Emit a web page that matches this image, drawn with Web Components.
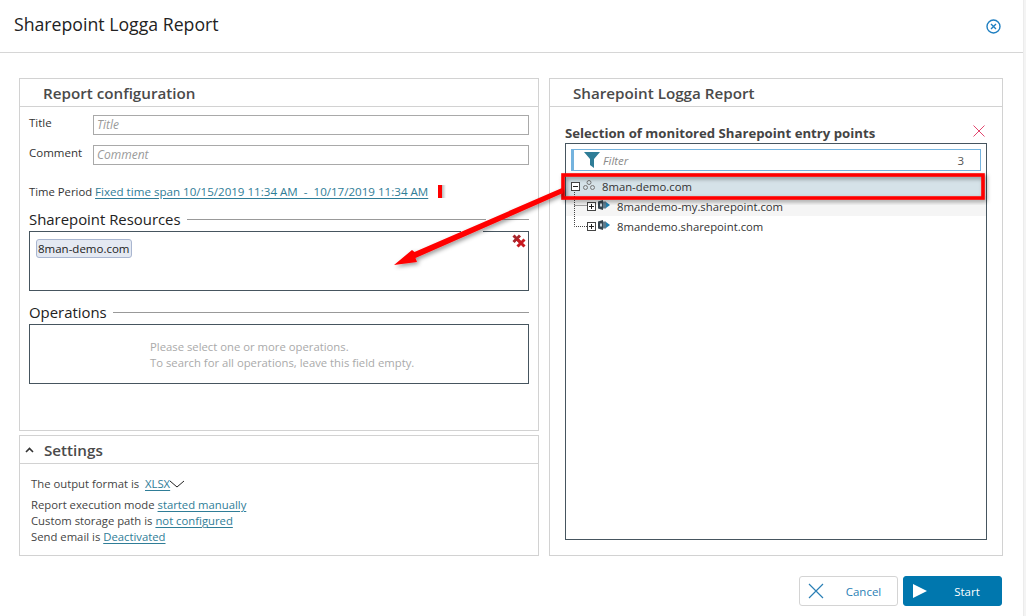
<!DOCTYPE html>
<html>
<head>
<meta charset="utf-8">
<title>Sharepoint Logga Report</title>
<style>
  html, body { margin: 0; height: 100%; background: #f4f4f4; overflow: hidden; }
  body { font-family: "Open Sans", "Noto Sans", sans-serif; }
</style>
</head>
<body>
<report-dialog></report-dialog>

<script>
(function () { 'use strict';

  const FONT = '"Open Sans", "Noto Sans", sans-serif';

  function make(tag, css, html) {
    customElements.define(tag, class extends HTMLElement {
      constructor() {
        super();
        this.attachShadow({ mode: 'open' });
        this.shadowRoot.innerHTML = `<style>${css}</style>${typeof html === 'function' ? html(this) : html}`;
      }
    });
  }

  // underlined teal value
  make('link-text',
    `:host { display: inline; color: #2f7d97; text-decoration: underline; text-underline-offset: 2px; }`,
    `<slot></slot>`);

  // white box with a title strip
  make('titled-panel',
    `:host { display: flex; flex-direction: column; box-sizing: border-box; background: #fff; border: 1px solid #d2d2d2; }
     .head { height: 28px; display: flex; align-items: center; padding: 1px 0 0 var(--head-pad, 23px); box-sizing: border-box;
       border-bottom: 1px solid var(--head-line, #d2d2d2); font-size: 15.2px; font-weight: 600; color: #4a4a4a; gap: 10px; flex: none; }
     .body { flex: 1; min-height: 0; padding: var(--body-pad, 0); display: flex; flex-direction: column; }`,
    `<div class="head"><slot name="chevron"></slot><slot name="title"></slot></div><div class="body"><slot></slot></div>`);

  make('text-field',
    `:host { display: flex; height: 20px; font-size: 11.5px; color: #333; }
     label { width: 64px; flex: none; }
     .input { flex: 1; box-sizing: border-box; border: 1px solid #a9a9a9; padding-left: 3px; font-size: 12px; font-style: italic; color: #9a9a9a; line-height: 18px; }`,
    self => `<label>${self.getAttribute('label')}</label><div class="input">${self.getAttribute('label')}</div>`);

  make('section-box',
    `:host { display: block; }
     .head { display: flex; align-items: center; gap: 6px; height: 20px; box-sizing: border-box; padding-top: 2px; font-size: 14.9px; color: #222; }
     .head i { flex: 1; height: 1px; background: #999; }
     .box { position: relative; box-sizing: border-box; height: 60px; margin-top: 3px; border: 1px solid #46555f; }`,
    self => `<div class="head">${self.getAttribute('heading')}<i></i></div><div class="box"><slot></slot></div>`);

  make('token-chip',
    `:host { display: inline-block; margin: 7px 0 0 6px; padding: 0 1px; height: 19px; line-height: 18px; box-sizing: border-box;
       font-size: 11.5px; color: #222; background: #e4e9f2; border: 1px solid #a9b6d0; border-radius: 3px; }`,
    `<slot></slot>`);

  make('tree-row',
    `:host { display: flex; align-items: center; height: 20px; box-sizing: border-box; font-size: 11.3px; color: #333; white-space: nowrap; background: var(--row-bg, transparent); }
     .ind { width: var(--ind, 0); flex: none; }
     svg { flex: none; display: block; }
     .icon { margin-left: var(--icon-gap, 2px); margin-top: -3px; }
     span { margin-left: 7px; }`,
    self => {
      const open = self.hasAttribute('open');
      const glyph = open
        ? '<path d="M2 4.5h5" stroke="#222"/>'
        : '<path d="M2 4.5h5M4.5 2v5" stroke="#222"/>';
      const icon = open
        ? `<svg class="icon" width="12" height="10" viewBox="0 0 12 10" fill="none" stroke="#777"><circle cx="6" cy="2.5" r="2"/><circle cx="2.5" cy="7.5" r="2"/><circle cx="9.5" cy="7.5" r="2"/></svg>`
        : `<svg class="icon" width="12" height="10" viewBox="0 0 12 10"><path d="M0 1.5 5 0v10L0 8.5z" fill="#35444e"/><rect x="5" y="1.5" width="3" height="7" fill="#5d7a8c"/><path d="M8 2l4 3-4 3z" fill="#1f7fae"/><rect x="2" y="3.5" width="2" height="3" fill="#c9d3da"/></svg>`;
      return `<div class="ind"></div>
        <svg width="9" height="9" viewBox="0 0 9 9" fill="none"><rect x=".5" y=".5" width="8" height="8" fill="#fff" stroke="#444"/>${glyph}</svg>
        ${icon}<span><slot></slot></span>`;
    });

  make('action-button',
    `:host { display: flex; align-items: center; box-sizing: border-box; width: 99px; height: 30px; border-radius: 3px; font-size: 11.5px;
       border: 1px solid #d4d4d4; background: #fff; color: #2a7fb5; padding-left: 8px; }
     :host([primary]) { background: #0077ae; border-color: #0077ae; color: #fff; }
     span { flex: 1; text-align: center; padding-left: 20px; padding-right: 14px; }
     svg { flex: none; display: block; }`,
    `<slot name="icon"></slot><span><slot></slot></span>`);

  make('monitored-tree',
    `:host { display: flex; flex-direction: column; flex: 1; min-height: 0; }
     .cap { display: flex; justify-content: space-between; align-items: center; height: 20px; padding-right: 2px;
       font-size: 13.2px; font-weight: 700; color: #444; }
     .cap svg { margin-top: -4px; }
     .tree { position: relative; flex: 1; box-sizing: border-box; border: 1px solid #46555f; padding: 5px 5px 0; }
     .filter { display: flex; align-items: center; box-sizing: border-box; height: 22px; border: 1px solid #74b3de; border-left-width: 3px;
       font-size: 11.5px; font-style: italic; color: #8a8a8a; padding: 0 16px 0 9px; gap: 2px; }
     .filter b { margin-left: auto; font-style: normal; font-weight: 400; color: #555; }
     .rows { margin: 4px -5px 0; }
     .root { --row-bg: #d5e2e8; --ind: 5px; --icon-gap: 3px; height: 21px; padding-top: 1px; margin-right: 1px; }
     .leaf { --ind: 21px; }
     .alt { --row-bg: #f5f5f5; }
     .dots { position: absolute; left: 8px; top: 46px; }`,
    `<div class="cap"><span>Selection of monitored Sharepoint entry points</span>
       <svg width="12" height="12" viewBox="0 0 12 12" fill="none" stroke="#e2466e"><path d="M.5.5l11 11M11.5.5l-11 11"/></svg></div>
     <div class="tree">
       <div class="filter">
         <svg width="18" height="16" viewBox="0 0 18 16"><path d="M1 0h16l-6 7v9l-4-3V7z" fill="#2f7d97"/></svg>
         Filter<b>3</b></div>
       <div class="rows">
         <tree-row class="root" open>8man-demo.com</tree-row>
         <tree-row class="leaf alt">8mandemo-my.sharepoint.com</tree-row>
         <tree-row class="leaf">8mandemo.sharepoint.com</tree-row>
       </div>
       <svg class="dots" width="14" height="38" viewBox="0 0 14 38" fill="none" stroke="#444" stroke-dasharray="1 1"><path d="M.5 0v36.5h13M.5 15.5h13"/></svg>
     </div>`);

  make('report-dialog',
    `:host { display: flex; flex-direction: column; position: relative; width: 1023px; height: 616px; background: #fff; font-family: ${FONT}; border-right: 1px solid #ececec; box-sizing: content-box; }
     header { display: flex; align-items: center; justify-content: space-between; height: 53px; box-sizing: border-box; flex: none;
       padding: 0 22px 4px 14px; border-bottom: 1px solid #d6d6d6; font-size: 17.7px; color: #222; }
     header svg { margin-top: 4px; }
     .cols { display: grid; grid-template-columns: 520px 454px; gap: 10px; padding: 25px 0 0 19px; flex: none; height: 477px; box-sizing: content-box; }
     .left { display: flex; flex-direction: column; gap: 4px; }
     .cfg { height: 353px; }
     .stack { padding: 8px 9px 0; display: flex; flex-direction: column; }
     .fields { display: flex; flex-direction: column; gap: 10px; }
     .period { margin-top: 16px; font-size: 11.3px; color: #333; display: flex; align-items: center; height: 20px; white-space: pre; }
     .period link-text { font-size: 11.58px; }
     .period u { display: block; width: 8px; height: 13px; margin-left: 10px; background: linear-gradient(90deg, #f00 0 4px, #bbb 4px, #fff 100%); }
     .res { margin-top: 7px; }
     .ops { margin-top: 10px; }
     .hint { position: absolute; left: 120px; top: 14px; font-size: 11.3px; line-height: 16px; color: #aaa; white-space: nowrap; }
     .clear { position: absolute; right: 2px; top: 2px; }
     .set { height: 121px; --head-pad: 5px; --body-pad: 9px 11px 0; }
     .set .lines { font-size: 11.3px; line-height: 16px; color: #444; }
     .set .first { display: flex; align-items: center; height: 22px; margin-bottom: 2px; white-space: pre; }
     .right { --head-line: #d2d2d2; --body-pad: 16px 15px 15px; }
     footer { display: flex; justify-content: flex-end; gap: 5px; padding: 21px 21px 0 0; }
     .overlay { position: absolute; left: 0; top: 0; pointer-events: none; }`,
    `<header><span>Sharepoint Logga Report</span>
       <svg width="15" height="15" viewBox="0 0 15 15" fill="none" stroke="#1f7fc1" stroke-width="1.4"><circle cx="7.5" cy="7.5" r="6.5"/><path d="M5 5l5 5M10 5l-5 5"/></svg></header>
     <div class="cols">
       <div class="left">
         <titled-panel class="cfg">
           <span slot="title">Report configuration</span>
           <div class="stack">
             <div class="fields"><text-field label="Title"></text-field><text-field label="Comment"></text-field></div>
             <div class="period">Time Period <link-text>Fixed time span 10/15/2019 11:34 AM  -  10/17/2019 11:34 AM</link-text><u></u></div>
             <section-box class="res" heading="Sharepoint Resources">
               <token-chip>8man-demo.com</token-chip>
               <svg class="clear" width="14" height="14" viewBox="0 0 14 14" fill="none"><path d="M1.5 1.5l6.5 6.5M8 1.5 1.5 8" stroke="#a8262c" stroke-width="3"/><path d="M5.5 5.5l7 7M12.5 5.5l-7 7" stroke="#c81a20" stroke-width="3"/></svg>
             </section-box>
             <section-box class="ops" heading="Operations">
               <div class="hint">Please select one or more operations.<br>To search for all operations, leave this field empty.</div>
             </section-box>
           </div>
         </titled-panel>
         <titled-panel class="set">
           <svg slot="chevron" width="9" height="6" viewBox="0 0 9 6" fill="none" stroke="#333" stroke-width="1.6"><path d="M1 5l3.5-3.5L8 5"/></svg>
           <span slot="title">Settings</span>
           <div class="lines">
             <div class="first">The output format is  <link-text>XLSX</link-text><svg width="14" height="8" viewBox="0 0 14 8" fill="none" stroke="#222"><path d="M0 1l7 6 7-6"/></svg></div>
             <div>Report execution mode <link-text>started manually</link-text></div>
             <div>Custom storage path is <link-text>not configured</link-text></div>
             <div>Send email is <link-text>Deactivated</link-text></div>
           </div>
         </titled-panel>
       </div>
       <titled-panel class="right">
         <span slot="title">Sharepoint Logga Report</span>
         <monitored-tree></monitored-tree>
       </titled-panel>
     </div>
     <footer>
       <action-button><svg slot="icon" width="16" height="16" viewBox="0 0 16 16" fill="none" stroke="#2a7fb5" stroke-width="1.2"><path d="M1 1l14 14M15 1 1 15"/></svg>Cancel</action-button>
       <action-button primary><svg slot="icon" width="15" height="14" viewBox="0 0 15 14" fill="#fff"><path d="M1 0l14 7-14 7z"/></svg>Start</action-button>
     </footer>
     <svg class="overlay" width="1026" height="616" viewBox="0 0 1026 616" fill="none">
       <defs><filter id="sh" x="-10%" y="-30%" width="120%" height="160%"><feDropShadow dx="2" dy="2" stdDeviation="2" flood-color="#000" flood-opacity=".4"/></filter></defs>
       <rect x="486" y="219" width="14" height="4" fill="#fff"/>
       <rect x="461" y="230" width="22" height="3" fill="#fff"/>
       <rect x="563" y="175" width="420" height="23" stroke="#f00" stroke-width="3.6" filter="url(#sh)"/>
       <path d="M562 188 414.5 252 412 250 394 265 417 262 415.5 258 563 193z" fill="#f00" filter="url(#sh)"/>
     </svg>`);

})();
</script>
</body>
</html>
